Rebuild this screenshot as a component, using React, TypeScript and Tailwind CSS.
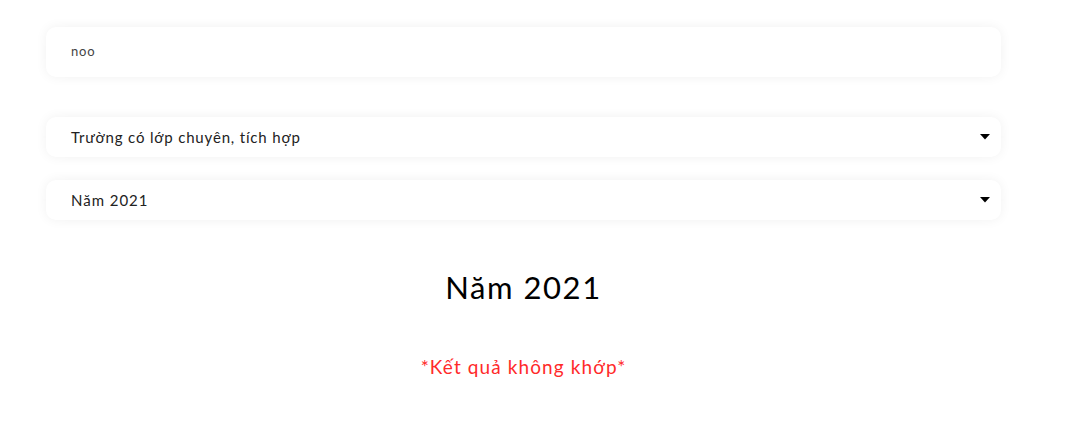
import React from "react";

function Caret() {
  return (
    <svg width="10" height="6" viewBox="0 0 10 6" className="shrink-0">
      <path d="M0 0 L10 0 L5 5.5 Z" fill="#000" />
    </svg>
  );
}

export default function App() {
  return (
    <div className="min-h-[438px] bg-white font-['Lato','Noto_Sans',sans-serif]">
      <div className="ml-[46px] w-[955px] pt-[27px]">
        <div className="flex h-[50px] items-center rounded-[10px] bg-white pl-[25px] shadow-[0_0_12px_rgba(0,0,0,0.06)]">
          <span className="text-[13px] tracking-[0.06em] text-[#444]">noo</span>
        </div>
        <div className="mt-[40px] flex h-[40px] items-center justify-between rounded-[10px] bg-white pl-[25px] pr-[11px] shadow-[0_0_12px_rgba(0,0,0,0.06)]">
          <span className="text-[15px] tracking-[0.055em] text-[#222]">Trường có lớp chuyên, tích hợp</span>
          <Caret />
        </div>
        <div className="mt-[23px] flex h-[40px] items-center justify-between rounded-[10px] bg-white pl-[25px] pr-[11px] shadow-[0_0_12px_rgba(0,0,0,0.06)]">
          <span className="text-[15px] tracking-[0.065em] text-[#222]">Năm 2021</span>
          <Caret />
        </div>
        <div className="mt-[47px] text-center text-[31px] leading-[40px] tracking-[0.05em] text-black">Năm 2021</div>
        <div className="mt-[48px] text-center text-[19px] leading-[24px] tracking-[0.058em] text-[#ff2a2a]">*Kết quả không khớp*</div>
      </div>
    </div>
  );
}
